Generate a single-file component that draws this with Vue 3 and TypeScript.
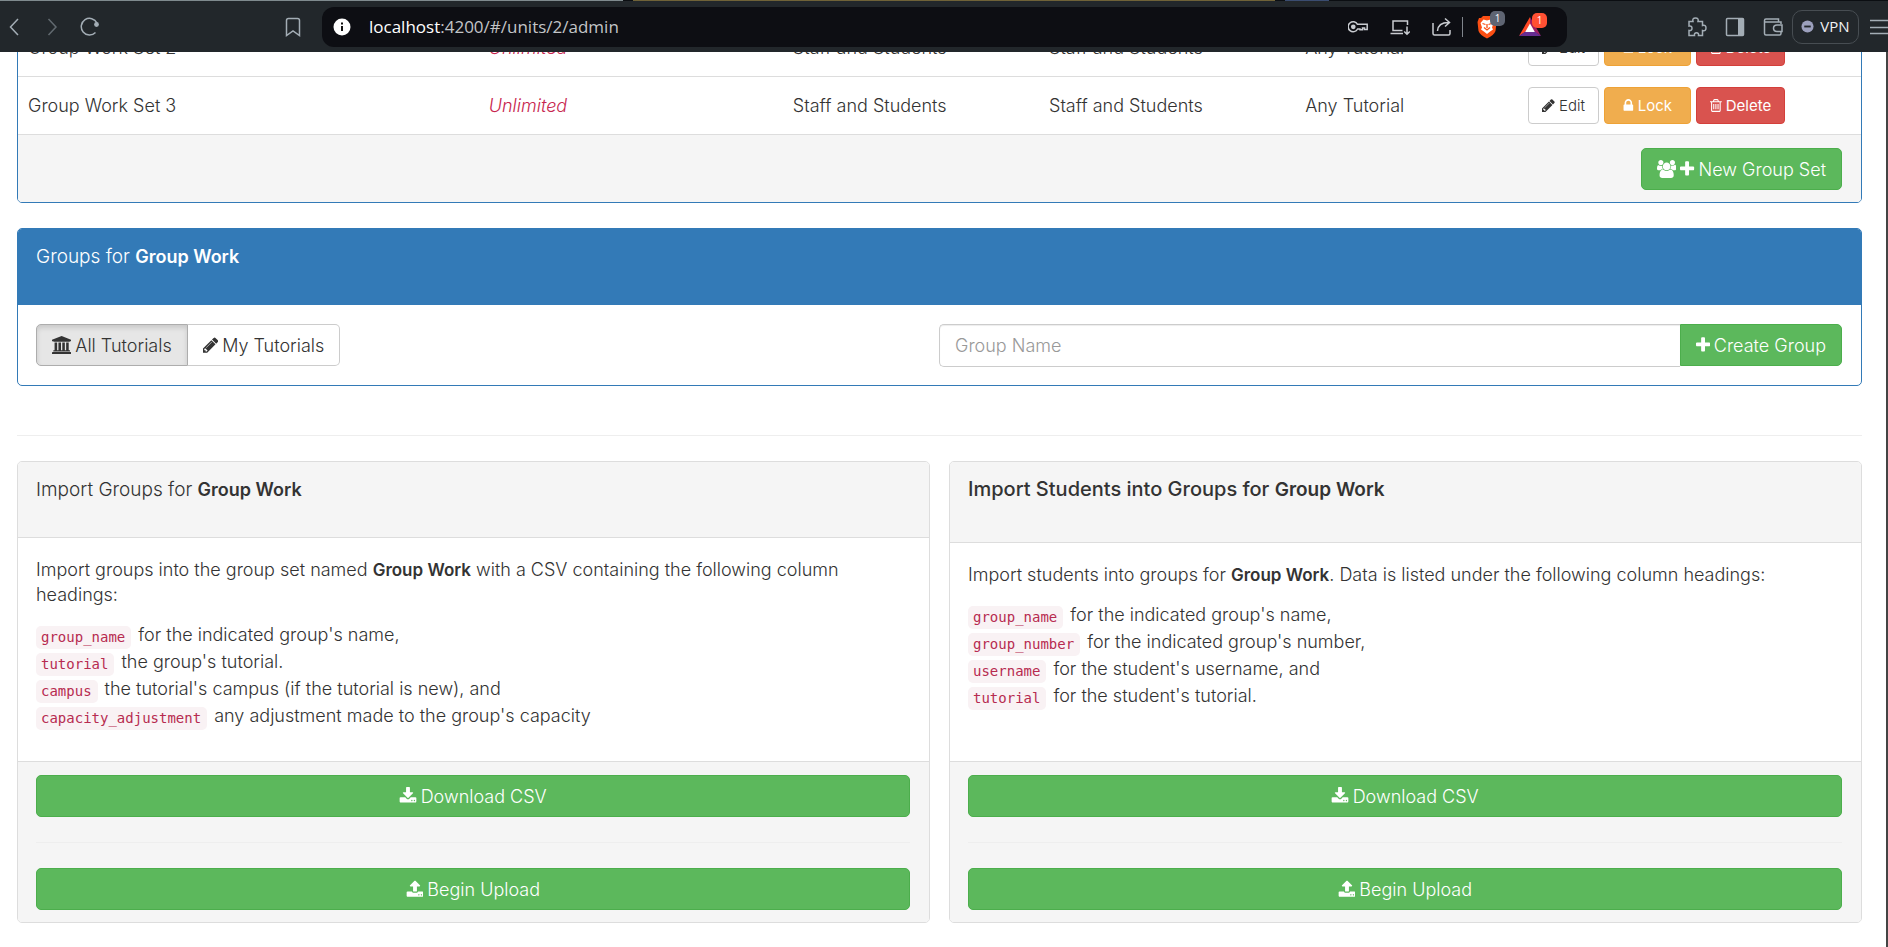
<script setup lang="ts">
import { ref } from 'vue'

interface GroupSet {
  name: string
  capacity: string
  create: string
  change: string
  tutorial: string
}

interface CsvColumn {
  code: string
  text: string
}

const groupSets: GroupSet[] = [
  { name: 'Group Work Set 2', capacity: 'Unlimited', create: 'Staff and Students', change: 'Staff and Students', tutorial: 'Any Tutorial' },
  { name: 'Group Work Set 3', capacity: 'Unlimited', create: 'Staff and Students', change: 'Staff and Students', tutorial: 'Any Tutorial' },
]

const groupColumns: CsvColumn[] = [
  { code: 'group_name', text: "for the indicated group's name," },
  { code: 'tutorial', text: "the group's tutorial." },
  { code: 'campus', text: "the tutorial's campus (if the tutorial is new), and" },
  { code: 'capacity_adjustment', text: "any adjustment made to the group's capacity" },
]

const studentColumns: CsvColumn[] = [
  { code: 'group_name', text: "for the indicated group's name," },
  { code: 'group_number', text: "for the indicated group's number," },
  { code: 'username', text: "for the student's username, and" },
  { code: 'tutorial', text: "for the student's tutorial." },
]

const url = { host: 'localhost', path: ':4200/#/units/2/admin' }
const tutorialFilter = ref<'all' | 'mine'>('all')
const groupName = ref('')

const icons = {
  pencil: 'M491 1536l91-91-235-235-91 91v107h128v128h107zm523-928q0-22-22-22-10 0-17 7l-542 542q-7 7-7 17 0 22 22 22 10 0 17-7l542-542q7-7 7-17zm-54-192l416 416-832 832h-416v-416zm683 96q0 53-37 90l-166 166-416-416 166-165q36-38 90-38 53 0 91 38l235 234q37 39 37 91z',
  lock: 'M640 768h512v-192q0-106-75-181t-181-75-181 75-75 181v192zm832 96v576q0 40-28 68t-68 28h-960q-40 0-68-28t-28-68v-576q0-40 28-68t68-28h32v-192q0-184 132-316t316-132 316 132 132 316v192h32q40 0 68 28t28 68z',
  trash: 'M704 736v576q0 14-9 23t-23 9h-64q-14 0-23-9t-9-23v-576q0-14 9-23t23-9h64q14 0 23 9t9 23zm256 0v576q0 14-9 23t-23 9h-64q-14 0-23-9t-9-23v-576q0-14 9-23t23-9h64q14 0 23 9t9 23zm256 0v576q0 14-9 23t-23 9h-64q-14 0-23-9t-9-23v-576q0-14 9-23t23-9h64q14 0 23 9t9 23zm128 724v-948h-896v948q0 22 7 40.5t14.5 27 10.5 8.5h832q3 0 10.5-8.5t14.5-27 7-40.5zm-672-1076h448l-48-117q-7-9-17-11h-317q-10 2-17 11zm928 32v64q0 14-9 23t-23 9h-96v948q0 83-47 143.5t-113 60.5h-832q-66 0-113-58.5t-47-141.5v-952h-96q-14 0-23-9t-9-23v-64q0-14 9-23t23-9h309l70-167q15-37 54-63t79-26h320q40 0 79 26t54 63l70 167h309q14 0 23 9t9 23z',
  plus: 'M1600 736v192q0 40-28 68t-68 28h-416v416q0 40-28 68t-68 28h-192q-40 0-68-28t-28-68v-416h-416q-40 0-68-28t-28-68v-192q0-40 28-68t68-28h416v-416q0-40 28-68t68-28h192q40 0 68 28t28 68v416h416q40 0 68 28t28 68z',
  download: 'M1344 1344q0-26-19-45t-45-19-45 19-19 45 19 45 45 19 45-19 19-45zm256 0q0-26-19-45t-45-19-45 19-19 45 19 45 45 19 45-19 19-45zm128-224v320q0 40-28 68t-68 28h-1472q-40 0-68-28t-28-68v-320q0-40 28-68t68-28h465l135 136q58 56 136 56t136-56l136-136h464q40 0 68 28t28 68zm-325-569q17 41-14 70l-448 448q-18 19-45 19t-45-19l-448-448q-31-29-14-70 17-39 59-39h256v-448q0-26 19-45t45-19h256q26 0 45 19t19 45v448h256q42 0 59 39z',
  upload: 'M1344 1472q0-26-19-45t-45-19-45 19-19 45 19 45 45 19 45-19 19-45zm256 0q0-26-19-45t-45-19-45 19-19 45 19 45 45 19 45-19 19-45zm128-224v320q0 40-28 68t-68 28h-1472q-40 0-68-28t-28-68v-320q0-40 28-68t68-28h427q21 56 70.5 92t110.5 36h256q61 0 110.5-36t70.5-92h427q40 0 68 28t28 68zm-325-648q-17 40-59 40h-256v448q0 26-19 45t-45 19h-256q-26 0-45-19t-19-45v-448h-256q-42 0-59-40-17-39 14-69l448-448q18-19 45-19t45 19l448 448q31 30 14 69z',
  university: 'M960 0l960 384v128h-128q0 26-20.5 45t-48.5 19h-1526q-28 0-48.5-19t-20.5-45h-128v-128zm-704 640h256v768h128v-768h256v768h128v-768h256v768h128v-768h256v768h59q28 0 48.5 19t20.5 45v64h-1664v-64q0-26 20.5-45t48.5-19h59v-768zm1595 960q28 0 48.5 19t20.5 45v128h-1920v-128q0-26 20.5-45t48.5-19h1782z',
  group: 'M593 896q-162 5-265 128h-134q-82 0-138-40.5t-56-118.5q0-353 124-353 6 0 43.5 21t97.5 42.5 119 21.5q67 0 133-23-5 37-5 66 0 159 81 293zm1071 637q0 120-73 189.5t-194 69.5h-874q-121 0-194-69.5t-73-189.5q0-53 3.5-103.5t14-109 26.5-108.5 43-97.5 62-81 85.5-53.5 111.5-20q10 0 43 21.5t73 48 107 48 135 21.5 135-21.5 107-48 73-48 43-21.5q61 0 111.5 20t85.5 53.5 62 81 43 97.5 26.5 108.5 14 109 3.5 103.5zm-1024-1277q0 106-75 181t-181 75-181-75-75-181 75-181 181-75 181 75 75 181zm704 384q0 159-112.5 271.5t-271.5 112.5-271.5-112.5-112.5-271.5 112.5-271.5 271.5-112.5 271.5 112.5 112.5 271.5zm576 225q0 78-56 118.5t-138 40.5h-134q-103-123-265-128 81-134 81-293 0-29-5-66 66 23 133 23 59 0 119-21.5t97.5-42.5 43.5-21q124 0 124 353zm-128-609q0 106-75 181t-181 75-181-75-75-181 75-181 181-75 181 75 75 181z',
}
</script>

<template>
  <div class="window">
    <header class="browser">
      <div class="tabs"><i class="tab-grey"></i><i class="tab-olive"></i><i class="tab-blue"></i></div>
      <div class="toolbar">
        <nav class="nav" aria-label="Browser navigation">
          <button class="tool" aria-label="Back">
            <svg viewBox="0 0 20 20"><path d="M14 2L6.500 10L14 18" /></svg>
          </button>
          <button class="tool dim" aria-label="Forward">
            <svg viewBox="0 0 20 20"><path d="M6.500 2L14 10L6.500 18" /></svg>
          </button>
          <button class="tool" aria-label="Reload">
            <svg viewBox="0 0 20 20"><path d="M17 6A8.300 8.300 0 1 0 15.500 15.500" /><circle cx="16.500" cy="7.500" r="2.400" fill="currentColor" stroke="none" /></svg>
          </button>
          <button class="tool bookmark" aria-label="Bookmark">
            <svg viewBox="0 0 20 20"><path d="M5.500 1.500H14.500Q16.500 1.500 16.500 3.500V18.500L10 14L3.500 18.500V3.500Q3.500 1.500 5.500 1.500Z" /></svg>
          </button>
        </nav>

        <div class="address">
          <svg class="info" viewBox="0 0 18 18"><circle cx="9" cy="9" r="8.500" fill="#fff" /><rect x="8" y="8" width="2" height="5" fill="#111" /><rect x="8" y="4.500" width="2" height="2" fill="#111" /></svg>
          <a class="url" href="#/units/2/admin"><span class="host">{{ url.host }}</span>{{ url.path }}</a>
          <div class="page-actions">
            <button class="tool light" aria-label="Passwords">
              <svg viewBox="0 0 20 20"><path d="M9.500 7.300H19.200V12.500H16.500V11H14.500V12.800H12V12H9.600A5 5 0 1 1 9.500 7.300Z" /><circle cx="5.300" cy="9.800" r="1.600" fill="currentColor" /></svg>
            </button>
            <button class="tool light" aria-label="Install app">
              <svg viewBox="0 0 20 20"><path d="M12.500 13.500H3V4H17.500V8M0.500 16.500H13M17 9.500V17M14.200 14.500L17 17.200L19.800 14.500" /></svg>
            </button>
            <button class="tool light" aria-label="Share">
              <svg viewBox="0 0 20 20"><path d="M1 6V16.500Q1 18 2.500 18H16.500Q18 18 18 16.500V13M5.500 14Q6 5.500 16.500 5.500M13 1.500L17.500 5.500L13 9.500" /></svg>
            </button>
            <span class="rule"></span>
            <button class="tool shield" aria-label="Brave Shields">
              <svg viewBox="0 0 20 24"><path d="M6 1H14L16 3L18 3L19.500 7L18.500 16Q17 20 10 23.500Q3 20 1.500 16L0.500 7L2 3L4 3Z" fill="#fb4f14" stroke="none" /><path d="M6.500 4.500L10 5.500L13.500 4.500L16.500 8L15 12.500L16 14.500L12.500 17L10 19L7.500 17L4 14.500L5 12.500L3.500 8Z" fill="#fff" stroke="none" /><path d="M5.500 8.500L8.500 9.500M14.500 8.500L11.500 9.500M10 9V13M7 12.500L10 15L13 12.500" stroke="#fb4f14" stroke-width="1.300" /></svg>
              <span class="badge grey">1</span>
            </button>
            <button class="tool rewards" aria-label="Brave Rewards">
              <svg viewBox="0 0 22 20"><path d="M11 0L0 19L11 12Z" fill="#ff4724" stroke="none" /><path d="M11 0L22 19L11 12Z" fill="#9e1f63" stroke="none" /><path d="M0 19H22L11 11Z" fill="#662d91" stroke="none" /><path d="M11 6.500L15.800 15H6.200Z" fill="#fff" stroke="none" /></svg>
              <span class="badge red">1</span>
            </button>
          </div>
        </div>

        <div class="extras">
          <button class="tool" aria-label="Extensions">
            <svg viewBox="0 0 20 20"><path d="M2 4.500H6Q5 1 8.500 1Q12 1 11 4.500H15.500V8.500Q19 7.500 19 11Q19 14.500 15.500 13.500V18.500H11.500Q12 15.800 9.500 15.800Q7 15.800 7.500 18.500H2V13.500Q5 14 5 11.200Q5 8.500 2 9Z" /></svg>
          </button>
          <button class="tool" aria-label="Sidebar">
            <svg viewBox="0 0 20 20"><rect x="1.500" y="1.500" width="17" height="17" rx="1" /><rect x="13" y="1.500" width="5.500" height="17" fill="currentColor" stroke="none" /></svg>
          </button>
          <button class="tool" aria-label="Wallet">
            <svg viewBox="0 0 20 20"><path d="M18 7V5H1.500V3.500Q1.500 2 3 2H15.500V5M1.500 5V16.500Q1.500 18 3 18H16.500Q18 18 18 16.500V15M19 8H14Q10.500 8 10.500 11.300Q10.500 14.500 14 14.500H19Z" /></svg>
          </button>
          <button class="vpn"><svg viewBox="0 0 14 14"><circle cx="7" cy="7" r="6.500" fill="#9ca0bd" /><rect x="3.500" y="6" width="7" height="2" fill="#22272b" /></svg>VPN</button>
          <button class="tool menu" aria-label="Menu">
            <svg viewBox="0 0 18 20"><path d="M0 3.500H18M0 10.500H18M0 16.500H18" /></svg>
          </button>
        </div>
      </div>
    </header>

    <main class="page">
      <section class="panel primary sets">
        <table>
          <colgroup><col class="c-name" /><col class="c-cap" /><col class="c-staff" /><col class="c-staff" /><col class="c-tut" /><col /></colgroup>
          <tbody>
            <tr v-for="set in groupSets" :key="set.name">
              <td>{{ set.name }}</td>
              <td><em>{{ set.capacity }}</em></td>
              <td>{{ set.create }}</td>
              <td>{{ set.change }}</td>
              <td>{{ set.tutorial }}</td>
              <td>
                <div class="actions">
                  <button class="btn small default"><svg class="icon" viewBox="128 0 1536 1792"><path :d="icons.pencil" /></svg>Edit</button>
                  <button class="btn small warning"><svg class="icon" viewBox="256 0 1280 1792"><path :d="icons.lock" /></svg>Lock</button>
                  <button class="btn small danger"><svg class="icon" viewBox="192 0 1408 1792"><path :d="icons.trash" /></svg>Delete</button>
                </div>
              </td>
            </tr>
          </tbody>
        </table>
        <footer class="foot end">
          <button class="btn success"><svg class="icon" viewBox="0 0 1920 1792"><path :d="icons.group" /></svg><svg class="icon" viewBox="192 0 1408 1792"><path :d="icons.plus" /></svg>New Group Set</button>
        </footer>
      </section>

      <section class="panel primary">
        <header class="head"><h3>Groups for <strong>Group Work</strong></h3></header>
        <div class="filters">
          <div class="toggle" role="group" aria-label="Tutorials">
            <button class="btn default" :class="{ active: tutorialFilter === 'all' }" @click="tutorialFilter = 'all'"><svg class="icon" viewBox="0 0 1920 1792"><path :d="icons.university" /></svg>All Tutorials</button>
            <button class="btn default" :class="{ active: tutorialFilter === 'mine' }" @click="tutorialFilter = 'mine'"><svg class="icon" viewBox="128 0 1536 1792"><path :d="icons.pencil" /></svg>My Tutorials</button>
          </div>
          <form class="create" @submit.prevent>
            <input v-model="groupName" type="text" placeholder="Group Name" aria-label="Group Name" />
            <button class="btn success"><svg class="icon" viewBox="192 0 1408 1792"><path :d="icons.plus" /></svg>Create Group</button>
          </form>
        </div>
      </section>

      <hr class="divider" />

      <div class="imports">
        <section class="panel">
          <header class="head"><h3>Import Groups for <strong>Group Work</strong></h3></header>
          <div class="body">
            <p>Import groups into the group set named <strong>Group Work</strong> with a CSV containing the following column headings:</p>
            <ul>
              <li v-for="column in groupColumns" :key="column.code"><code>{{ column.code }}</code>{{ column.text }}</li>
            </ul>
          </div>
          <footer class="foot">
            <button class="btn success"><svg class="icon" viewBox="0 0 1728 1792"><path :d="icons.download" /></svg>Download CSV</button>
            <hr />
            <button class="btn success"><svg class="icon" viewBox="0 0 1728 1792"><path :d="icons.upload" /></svg>Begin Upload</button>
          </footer>
        </section>

        <section class="panel">
          <header class="head large"><h3>Import Students into Groups for <strong>Group Work</strong></h3></header>
          <div class="body">
            <p>Import students into groups for <strong>Group Work</strong>. Data is listed under the following column headings:</p>
            <ul>
              <li v-for="column in studentColumns" :key="column.code"><code>{{ column.code }}</code>{{ column.text }}</li>
            </ul>
          </div>
          <footer class="foot">
            <button class="btn success"><svg class="icon" viewBox="0 0 1728 1792"><path :d="icons.download" /></svg>Download CSV</button>
            <hr />
            <button class="btn success"><svg class="icon" viewBox="0 0 1728 1792"><path :d="icons.upload" /></svg>Begin Upload</button>
          </footer>
        </section>
      </div>
    </main>
  </div>
</template>

<style>
body {
  margin: 0;
  background: #fff;
}
</style>

<style scoped>
* {
  box-sizing: border-box;
}

.window {
  display: flex;
  flex-direction: column;
  min-height: 100vh;
  color: #333;
  font-family: Inter, "Liberation Sans", sans-serif;
  font-size: 18px;
  font-weight: 300;
  line-height: 25px;
}

button {
  font: inherit;
  cursor: pointer;
}

/* Browser chrome */
.browser {
  position: sticky;
  top: 0;
  z-index: 1;
  background: #22272b;
  color: #a3adb5;
}

.tabs {
  display: flex;
  height: 1px;
  gap: 10px;
  background: #0b0e12;
}

.tab-grey {
  width: 33%;
  background: #7f8a8e;
}

.tab-olive {
  width: 34%;
  background: #6f6238;
}

.tab-blue {
  width: 44px;
  background: #3a4c70;
}

.toolbar {
  display: flex;
  align-items: center;
  height: 51px;
}

.nav {
  display: flex;
  align-items: center;
  gap: 18px;
  width: 322px;
  padding: 0 19px 0 4px;
}

.bookmark {
  margin-left: auto;
}

.tool {
  position: relative;
  display: flex;
  flex: none;
  width: 20px;
  height: 20px;
  padding: 0;
  border: 0;
  background: none;
  color: inherit;
}

.tool svg {
  width: 100%;
  height: 100%;
  fill: none;
  stroke: currentColor;
  stroke-width: 1.5;
}

.dim {
  color: #626a70;
}

.light {
  color: #c9ccd1;
}

.address {
  display: flex;
  flex: 1;
  align-items: center;
  gap: 18px;
  height: 40px;
  padding: 0 26px 0 11px;
  border-radius: 12px;
  background: #0d0e13;
}

.info {
  width: 18px;
  height: 18px;
}

.url {
  flex: 1;
  color: #c3c5c8;
  font-family: "Open Sans", "Noto Sans", sans-serif;
  font-size: 17px;
  font-weight: 400;
  text-decoration: none;
}

.host {
  color: #fff;
}

.page-actions {
  display: flex;
  align-items: center;
  gap: 22px;
}

.rule {
  width: 1px;
  height: 20px;
  margin: 0 -8px 0 -12px;
  background: #80858c;
}

.tool.shield {
  height: 24px;
}

.tool.rewards {
  width: 22px;
}

.badge {
  position: absolute;
  top: -4px;
  left: 13px;
  width: 15px;
  height: 15px;
  border-radius: 5px;
  color: #fff;
  font-family: "Open Sans", sans-serif;
  font-size: 10px;
  font-weight: 400;
  line-height: 15px;
  text-align: center;
}

.badge.grey {
  background: #5e6472;
}

.badge.red {
  background: #ff5033;
}

.extras {
  display: flex;
  align-items: center;
  gap: 18px;
  width: 321px;
  padding-left: 120px;
}

.vpn {
  display: flex;
  flex: none;
  align-items: center;
  justify-content: center;
  gap: 6px;
  width: 67px;
  height: 34px;
  margin: 0 -7px 0 -9px;
  padding: 0;
  border: 1px solid #474d52;
  border-radius: 10px;
  background: none;
  color: #f1f2f3;
  font-family: "Open Sans", "Noto Sans", sans-serif;
  font-size: 15px;
  font-weight: 400;
}

.vpn svg {
  width: 13px;
  height: 13px;
}

.tool.menu {
  flex: 1;
}

/* Page */
.page {
  flex: 1;
  padding: 0 24px 22px 17px;
  border-right: 2px solid #444;
  overflow: hidden;
}

.panel {
  display: flex;
  flex-direction: column;
  border: 1px solid #ddd;
  border-radius: 5px;
  background: #fff;
  overflow: hidden;
}

.panel.primary {
  margin-bottom: 25px;
  border-color: #337ab7;
}

/* The list is scrolled so its first visible row sits partly under the toolbar. */
.panel.sets {
  margin-top: -34px;
}

table {
  width: 100%;
  border-spacing: 0;
  table-layout: fixed;
}

.c-name {
  width: 25%;
}

.c-cap {
  width: 16.5%;
}

.c-staff {
  width: 13.9%;
}

.c-tut {
  width: 12.1%;
}

td {
  height: 58px;
  padding: 0 10px;
  border-bottom: 1px solid #ddd;
}

em {
  color: #c7254e;
}

.actions {
  display: flex;
  gap: 5px;
}

.btn {
  display: inline-flex;
  align-items: center;
  justify-content: center;
  gap: 4px;
  height: 42px;
  padding: 0 15px;
  border: 1px solid #ccc;
  border-radius: 5px;
  white-space: nowrap;
}

.icon {
  flex: none;
  height: 18px;
  fill: currentColor;
}

.btn.small {
  height: 37px;
  padding: 0 13px;
  border-radius: 4px;
  font-size: 15px;
}

.small .icon {
  height: 15px;
}

.default {
  background: #fff;
  color: #333;
}

.active {
  border-color: #adadad;
  background: #e6e6e6;
  box-shadow: inset 0 3px 5px rgba(0, 0, 0, 0.125);
}

.success {
  border-color: #4cae4c;
  background: #5cb85c;
  color: #fff;
}

.btn.warning {
  padding: 0 18px;
  border-color: #eea236;
  background: #f0ad4e;
  color: #fff;
  font-weight: 400;
}

.danger {
  border-color: #d43f3a;
  background: #d9534f;
  color: #fff;
  font-weight: 400;
}

.foot {
  display: flex;
  flex-direction: column;
  padding: 13px 19px 12px 18px;
  border-top: 1px solid #ddd;
  background: #f5f5f5;
}

.foot.end {
  align-items: flex-end;
  border-top: 0;
}

.foot hr {
  width: 100%;
  margin: 25px 0;
  border: 0;
  border-top: 1px solid #eee;
}

.head {
  height: 76px;
  padding: 15px 18px;
  border-bottom: 1px solid #ddd;
  background: #f5f5f5;
}

.head.large {
  height: 81px;
}

.primary .head {
  border-color: #337ab7;
  background: #337ab7;
  color: #fff;
}

h3 {
  margin: 0;
  font-size: 19px;
  font-weight: 300;
  line-height: 25px;
}

.large h3 {
  font-size: 20px;
  font-weight: 500;
}

strong {
  font-size: 17px;
  font-weight: 600;
  line-height: 1;
}

h3 strong {
  font-size: 18px;
}

.large strong {
  font-size: 19px;
}

.filters {
  display: flex;
  justify-content: space-between;
  padding: 19px 19px 18px 18px;
}

.toggle {
  display: flex;
}

.toggle .btn:first-child {
  border-radius: 5px 0 0 5px;
}

.toggle .btn:last-child {
  border-left: 0;
  border-radius: 0 5px 5px 0;
}

.create {
  display: flex;
  width: 50%;
}

input {
  flex: 1;
  min-width: 0;
  height: 43px;
  padding: 0 15px;
  border: 1px solid #ccc;
  border-right: 0;
  border-radius: 5px 0 0 5px;
  background: #fff;
  box-shadow: inset 0 1px 1px rgba(0, 0, 0, 0.075);
  color: #555;
  font: inherit;
}

input::placeholder {
  color: #999;
  opacity: 1;
}

.create .btn {
  border-radius: 0 5px 5px 0;
}

.divider {
  margin: 49px 0 25px;
  border: 0;
  border-top: 1px solid #eee;
}

.imports {
  display: grid;
  grid-template-columns: 1fr 1fr;
  gap: 19px;
}

.body {
  flex: 1;
  padding: 19px 18px 31px;
}

p {
  margin: 0 0 15px;
}

ul {
  margin: 0;
  padding: 0;
  list-style: none;
}

li {
  display: flex;
  align-items: flex-start;
  gap: 7px;
  height: 27px;
}

code {
  height: 23px;
  margin-top: 4px;
  padding: 0 6px 0 5px;
  border-radius: 5px;
  background: #f9f2f4;
  color: #b72b50;
  font-family: "DejaVu Sans Mono", "Liberation Mono", monospace;
  font-size: 14px;
  font-weight: 400;
  line-height: 23px;
}
</style>
